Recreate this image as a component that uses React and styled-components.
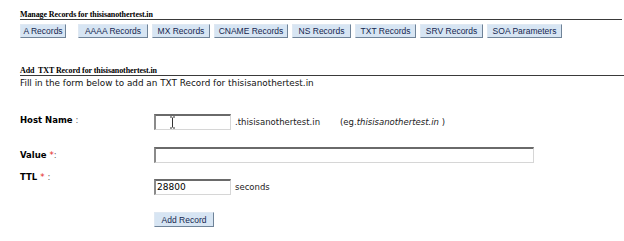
import React from "react";
import styled, { createGlobalStyle } from "styled-components";

const Global = createGlobalStyle`
  html, body { margin: 0; padding: 0; background: #fff; }
  body { font-family: "DejaVu Sans", Verdana, sans-serif; color: #000; }
`;

const Page = styled.div`
  width: 624px;
  height: 241px;
  overflow: hidden;
  box-sizing: border-box;
  padding-left: 20px;
`;

const SectionTitle = styled.div`
  font-family: "Liberation Serif", "Times New Roman", serif;
  font-weight: bold;
  font-size: 8px;
  line-height: 8px;
  height: 8px;
  margin-top: ${(p) => p.top}px;
  margin-right: ${(p) => p.right}px;
  border-bottom: 1px solid #3a3a3a;
  letter-spacing: -0.1px;
  white-space: nowrap;
`;

const TabBar = styled.div`
  display: flex;
  gap: 4px;
  margin-top: 4px;
`;

const TabButton = styled.button`
  box-sizing: border-box;
  width: ${(p) => p.w}px;
  margin-right: ${(p) => p.extra || 0}px;
  height: 14px;
  padding: 0;
  background: #d7e5f3;
  border: 1px solid;
  border-color: #dfe8f2 #6f8398 #6f8398 #dfe8f2;
  font-family: "Liberation Sans", Tahoma, Arial, sans-serif;
  font-size: 8.5px;
  line-height: 12px;
  color: #15264f;
  text-align: center;
  white-space: nowrap;
`;

const Intro = styled.div`
  font-size: 8.85px;
  line-height: 12px;
  margin-top: 1px;
  color: #111;
  white-space: nowrap;
`;

const Form = styled.div`
  display: grid;
  grid-template-columns: 134px 1fr;
  margin-top: 25px;
`;

const Label = styled.div`
  font-weight: bold;
  font-size: 8.5px;
  line-height: 10px;
  align-self: ${(p) => (p.top ? "start" : "center")};
  margin-top: ${(p) => p.mt || 0}px;
  white-space: nowrap;
`;

const Colon = styled.span`
  font-weight: normal;
  color: #666;
`;

const Star = styled.span`
  color: #e41b1b;
  font-weight: normal;
`;

const Field = styled.div`
  display: flex;
  align-items: center;
  margin-top: ${(p) => p.mt || 0}px;
  font-size: 8.5px;
  color: #222;
  white-space: nowrap;
`;

const TextInput = styled.div`
  position: relative;
  box-sizing: border-box;
  width: ${(p) => p.w}px;
  height: 16px;
  background: #fff;
  border-style: solid;
  border-width: 2px 1px 1px 2px;
  border-color: #6a6a6a #d6d6d6 #d6d6d6 #8a8a8a;
  font-size: 9px;
  line-height: 13px;
  padding-left: 1px;
  color: #000;
`;

const Suffix = styled.span`
  margin-left: ${(p) => p.ml}px;
`;

const Cursor = styled.svg`
  position: absolute;
  left: 13px;
  top: 0px;
`;

const SubmitButton = styled(TabButton)`
  margin-top: 17px;
  height: 15px;
  grid-column: 2;
  justify-self: start;
`;

const tabs = [
  ["A Records", 46, 8],
  ["AAAA Records", 70],
  ["MX Records", 58],
  ["CNAME Records", 74],
  ["NS Records", 59],
  ["TXT Records", 61],
  ["SRV Records", 63],
  ["SOA Parameters", 75],
];

export default function App() {
  return (
    <Page>
      <Global />
      <SectionTitle top={11} right={2}>
        Manage Records for thisisanothertest.in
      </SectionTitle>
      <TabBar>
        {tabs.map(([t, w, extra]) => (
          <TabButton key={t} w={w} extra={extra}>
            {t}
          </TabButton>
        ))}
      </TabBar>
      <SectionTitle top={29} right={0}>
        Add&nbsp; TXT Record for thisisanothertest.in
      </SectionTitle>
      <Intro>Fill in the form below to add an TXT Record for thisisanothertest.in</Intro>
      <Form>
        <Label top mt={1}>
          Host Name <Colon>:</Colon>
        </Label>
        <Field>
          <TextInput w={77}>
            <Cursor width="7" height="13" viewBox="0 0 7 13">
              <path d="M1 1h2M4 1h2M3.5 1.5v10M1 12h2M4 12h2" stroke="#333" strokeWidth="1" fill="none" />
            </Cursor>
          </TextInput>
          <Suffix ml={4}>.thisisanothertest.in</Suffix>
          <Suffix ml={20}>
            (eg.<i>thisisanothertest.in</i> )
          </Suffix>
        </Field>

        <Label mt={17}>
          Value <Star>*</Star>
          <Colon>:</Colon>
        </Label>
        <Field mt={17}>
          <TextInput w={380} />
        </Field>

        <Label top mt={9}>
          TTL <Star>*</Star> <Colon>:</Colon>
        </Label>
        <Field mt={16}>
          <TextInput w={77}>28800</TextInput>
          <Suffix ml={4}>seconds</Suffix>
        </Field>

        <SubmitButton w={60}>Add Record</SubmitButton>
      </Form>
    </Page>
  );
}
